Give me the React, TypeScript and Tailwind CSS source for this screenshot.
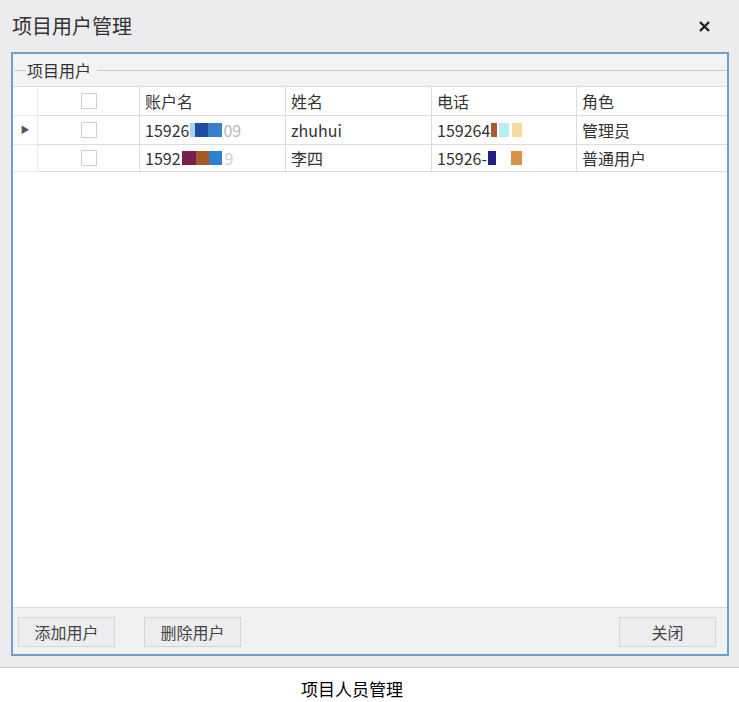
import React from "react";

const font = { fontFamily: '"Noto Sans CJK SC", "Noto Sans", sans-serif' };

function Box() {
  return <span className="block w-[16px] h-[16px] border border-[#cfcfd3] bg-white" />;
}

function Blocks({ items }: { items: { w: number; c: string; ml?: number }[] }) {
  return (
    <span className="inline-flex items-center h-[14px] ml-[1px]">
      {items.map((b, i) => (
        <span key={i} className="inline-block h-[14px]" style={{ width: b.w, background: b.c, marginLeft: b.ml ?? 0 }} />
      ))}
    </span>
  );
}

export default function App() {
  const cell = "h-full flex items-center px-[5px] border-r border-b border-[#dcdcdf] text-[16px] text-[#333] whitespace-nowrap overflow-hidden";
  const btn = "w-[97px] h-[30px] border border-[#d6d6da] bg-[#ededf0] text-[16px] text-[#444]";
  return (
    <div className="w-[739px] h-[702px] bg-white flex flex-col" style={font}>
      {/* window */}
      <div className="h-[668px] shrink-0 bg-[#ececef] border-b border-[#c9c9cd] flex flex-col">
        <div className="h-[52px] flex items-center justify-between pl-[12px] pr-[29px]">
          <span className="text-[20px] text-[#333]">项目用户管理</span>
          <svg width="11" height="11" viewBox="0 0 11 11">
            <path d="M1 1 L10 10 M10 1 L1 10" stroke="#222" strokeWidth="2.4" />
          </svg>
        </div>

        <div className="flex-1 ml-[11px] mr-[10px] mb-[11px] border-2 border-[#6f9fd0] bg-white flex flex-col">
          {/* group header */}
          <div className="h-[32px] bg-[#f3f3f6] flex items-center pl-[1px]">
            <span className="w-[11px] h-px bg-[#c8c8cc]" />
            <span className="px-[2px] text-[16px] text-[#333]">项目用户</span>
            <span className="flex-1 h-px bg-[#c8c8cc] ml-[4px]" />
          </div>

          {/* grid */}
          <div className="grid grid-cols-[25px_102px_146px_146px_145px_1fr] grid-rows-[29px_29px_27px] border-t border-[#dcdcdf]">
            <div className="h-full border-r border-b border-[#ececef]" />
            <div className={`${cell} justify-center`}><Box /></div>
            <div className={cell}>账户名</div>
            <div className={cell}>姓名</div>
            <div className={cell}>电话</div>
            <div className={`${cell} border-r-0`}>角色</div>

            <div className="h-full flex items-center justify-center border-r border-b border-[#ececef] text-[9px] text-[#555]">▶</div>
            <div className={`${cell} justify-center`}><Box /></div>
            <div className={cell}>
              15926
              <Blocks items={[{ w: 5, c: "#a9d2f0" }, { w: 13, c: "#1f4ea0" }, { w: 14, c: "#3a7fcf" }]} />
              <span className="text-[#b8b8bc] ml-[1px]">09</span>
            </div>
            <div className={cell}>zhuhui</div>
            <div className={cell}>
              159264
              <Blocks items={[{ w: 6, c: "#a55a32" }, { w: 10, c: "#b9edf4", ml: 2 }, { w: 10, c: "#f6dc9a", ml: 3 }]} />
            </div>
            <div className={`${cell} border-r-0`}>管理员</div>

            <div className="h-full border-r border-b border-[#ececef]" />
            <div className={`${cell} justify-center`}><Box /></div>
            <div className={cell}>
              1592
              <Blocks items={[{ w: 14, c: "#7a1f4d" }, { w: 13, c: "#a55a25" }, { w: 13, c: "#2f7fd0" }]} />
              <span className="text-[#d0d0d4] ml-[3px]">9</span>
            </div>
            <div className={cell}>李四</div>
            <div className={cell}>
              15926-
              <Blocks items={[{ w: 8, c: "#241f86" }, { w: 11, c: "#d9914a", ml: 15 }]} />
            </div>
            <div className={`${cell} border-r-0`}>普通用户</div>
          </div>

          <div className="flex-1" />

          {/* buttons */}
          <div className="h-[47px] border-t border-[#d9d9dc] bg-[#f1f1f3] flex items-start pt-[9px] pl-[5px] pr-[11px]">
            <button className={btn}>添加用户</button>
            <button className={`${btn} ml-[29px]`}>删除用户</button>
            <div className="flex-1" />
            <button className={btn}>关闭</button>
          </div>
        </div>
      </div>

      <div className="flex-1 flex justify-center pt-[10px] pr-[35px] text-[17px] leading-[22px] text-black">项目人员管理</div>
    </div>
  );
}
